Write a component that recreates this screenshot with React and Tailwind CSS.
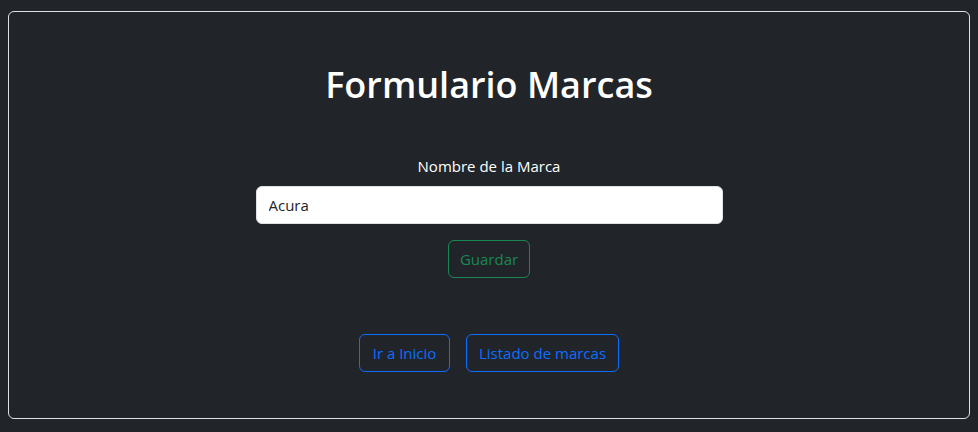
export default function App() {
  return (
    <div className="min-h-[432px] w-full bg-[#212529] pt-[11px] px-[8px] pb-[12px]" style={{ fontFamily: '"Open Sans", "Noto Sans", sans-serif' }}>
      <div className="flex flex-col items-center rounded-[6px] border border-[#dee2e6] pt-[49px] pb-[46px]">
        <h1 className="text-[36px] font-semibold leading-[48px] text-white">Formulario Marcas</h1>
        <label className="mt-[45px] mb-[8px] text-[15px] leading-[24px] text-white">Nombre de la Marca</label>
        <input
          defaultValue="Acura"
          className="h-[38px] w-[467px] rounded-[6px] border border-[#dee2e6] bg-white px-[12px] text-[15px] text-[#212529] outline-none"
        />
        <button className="mt-[16px] h-[38px] w-[82px] rounded-[6px] border border-[#198754] text-[15px] text-[#198754]">Guardar</button>
        <div className="mt-[56px] flex gap-[16px]">
          <button className="h-[38px] w-[91px] rounded-[6px] border border-[#0d6efd] text-[15px] text-[#0d6efd]">Ir a Inicio</button>
          <button className="h-[38px] w-[153px] rounded-[6px] border border-[#0d6efd] text-[15px] text-[#0d6efd]">Listado de marcas</button>
        </div>
      </div>
    </div>
  );
}
